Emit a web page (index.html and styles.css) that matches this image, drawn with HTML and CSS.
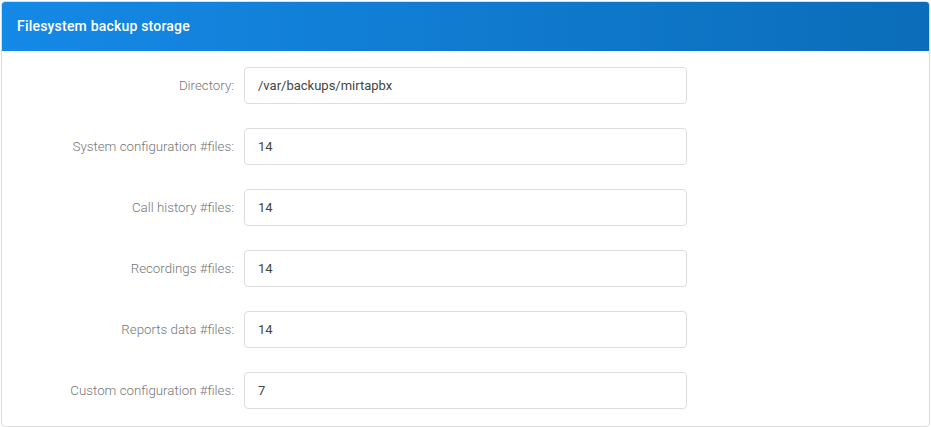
FILE: index.html
```html
<!DOCTYPE html>
<html lang="en">
<head>
  <meta charset="UTF-8">
  <title>Filesystem backup storage</title>
  <link rel="stylesheet" href="styles.css">
</head>
<body>
  <div class="panel">
    <div class="panel-heading">Filesystem backup storage</div>
    <div class="panel-body">
      <div class="form-row">
        <label for="dir">Directory:</label>
        <input type="text" id="dir" value="/var/backups/mirtapbx">
      </div>
      <div class="form-row">
        <label for="sysFiles">System configuration #files:</label>
        <input type="text" id="sysFiles" value="14">
      </div>
      <div class="form-row">
        <label for="callFiles">Call history #files:</label>
        <input type="text" id="callFiles" value="14">
      </div>
      <div class="form-row">
        <label for="recFiles">Recordings #files:</label>
        <input type="text" id="recFiles" value="14">
      </div>
      <div class="form-row">
        <label for="repFiles">Reports data #files:</label>
        <input type="text" id="repFiles" value="14">
      </div>
      <div class="form-row">
        <label for="customFiles">Custom configuration #files:</label>
        <input type="text" id="customFiles" value="7">
      </div>
    </div>
  </div>
</body>
</html>
```

FILE: styles.css
```css
body {
  margin: 1px;
  background-color: #fff;
  font-family: Roboto, "Liberation Sans", sans-serif;
  font-size: 13px;
}
.panel {
  border: 1px solid #dcdcdc;
  border-radius: 4px;
  overflow: hidden;
  box-sizing: border-box;
  height: 426px;
}
.panel-heading {
  background: linear-gradient(to right, #1589e7, #0b6db9);
  color: #fff;
  font-size: 14px;
  font-weight: 500;
  letter-spacing: 0.2px;
  height: 50px;
  line-height: 51px;
  padding-left: 16px;
  margin: -1px -1px 0 -1px;
}
.panel-body {
  padding: 16px 0 16px 0;
  display: flex;
  flex-direction: column;
  gap: 24px;
}
.form-row {
  display: grid;
  grid-template-columns: 232px 443px;
  column-gap: 10px;
  align-items: center;
}
label {
  text-align: right;
  color: #777;
  font-weight: 300;
  font-size: 13.3px;
}
input {
  height: 37px;
  box-sizing: border-box;
  padding: 0 13px;
  border: 1px solid #ddd;
  border-radius: 4px;
  font-family: Roboto, "Liberation Sans", sans-serif;
  font-size: 13px;
  color: #444;
  background: #fff;
}
```
